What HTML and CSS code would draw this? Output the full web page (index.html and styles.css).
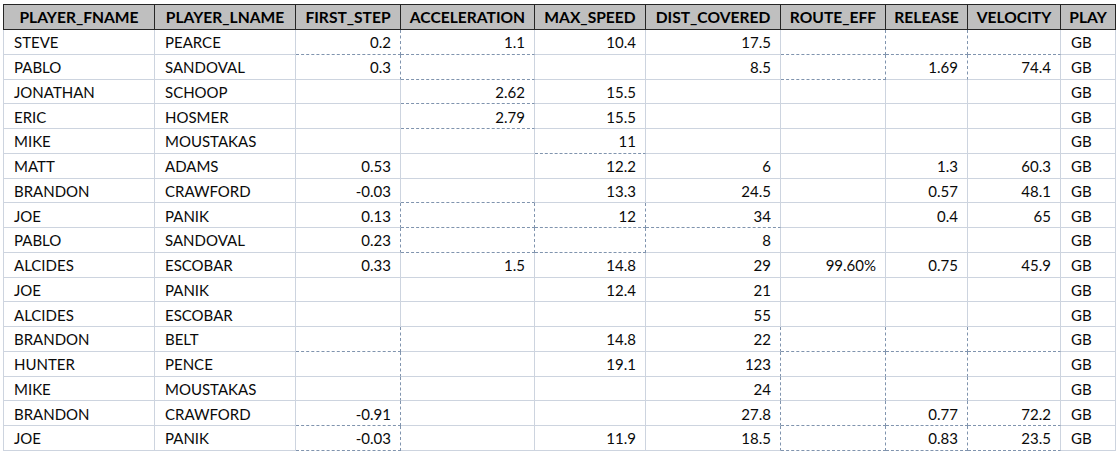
FILE: index.html
```html
<!DOCTYPE html>
<html>
<head>
<meta charset="utf-8">
<link rel="stylesheet" href="styles.css">
</head>
<body>
<table class="sheet">
<colgroup>
<col class="c1"><col class="c2"><col class="c3"><col class="c4"><col class="c5"><col class="c6"><col class="c7"><col class="c8"><col class="c9"><col class="c10">
</colgroup>
<thead>
<tr><th>PLAYER_FNAME</th><th>PLAYER_LNAME</th><th>FIRST_STEP</th><th>ACCELERATION</th><th>MAX_SPEED</th><th>DIST_COVERED</th><th>ROUTE_EFF</th><th>RELEASE</th><th>VELOCITY</th><th>PLAY</th></tr>
</thead>
<tbody>
<tr><td>STEVE</td><td>PEARCE</td><td class="n db dr">0.2</td><td class="n db">1.1</td><td class="n">10.4</td><td class="n">17.5</td><td class="n db dr"></td><td class="n db dr"></td><td class="n db"></td><td>GB</td></tr>
<tr><td>PABLO</td><td>SANDOVAL</td><td class="n dr">0.3</td><td class="n db"></td><td class="n"></td><td class="n">8.5</td><td class="n db dr"></td><td class="n dr">1.69</td><td class="n">74.4</td><td>GB</td></tr>
<tr><td>JONATHAN</td><td>SCHOOP</td><td class="n"></td><td class="n db">2.62</td><td class="n">15.5</td><td class="n"></td><td class="n"></td><td class="n"></td><td class="n"></td><td>GB</td></tr>
<tr><td>ERIC</td><td>HOSMER</td><td class="n"></td><td class="n db">2.79</td><td class="n">15.5</td><td class="n"></td><td class="n"></td><td class="n"></td><td class="n"></td><td>GB</td></tr>
<tr><td>MIKE</td><td>MOUSTAKAS</td><td class="n"></td><td class="n"></td><td class="n db">11</td><td class="n"></td><td class="n"></td><td class="n"></td><td class="n"></td><td>GB</td></tr>
<tr><td>MATT</td><td>ADAMS</td><td class="n">0.53</td><td class="n"></td><td class="n">12.2</td><td class="n">6</td><td class="n"></td><td class="n">1.3</td><td class="n">60.3</td><td>GB</td></tr>
<tr><td>BRANDON</td><td>CRAWFORD</td><td class="n">-0.03</td><td class="n db"></td><td class="n">13.3</td><td class="n">24.5</td><td class="n"></td><td class="n">0.57</td><td class="n">48.1</td><td>GB</td></tr>
<tr><td>JOE</td><td>PANIK</td><td class="n dr">0.13</td><td class="n db dr"></td><td class="n db dr">12</td><td class="n db">34</td><td class="n"></td><td class="n">0.4</td><td class="n">65</td><td>GB</td></tr>
<tr><td>PABLO</td><td>SANDOVAL</td><td class="n dr">0.23</td><td class="n db dr"></td><td class="n db dr"></td><td class="n">8</td><td class="n"></td><td class="n"></td><td class="n"></td><td>GB</td></tr>
<tr><td>ALCIDES</td><td>ESCOBAR</td><td class="n">0.33</td><td class="n">1.5</td><td class="n">14.8</td><td class="n">29</td><td class="n">99.60%</td><td class="n">0.75</td><td class="n">45.9</td><td>GB</td></tr>
<tr><td>JOE</td><td>PANIK</td><td class="n"></td><td class="n"></td><td class="n">12.4</td><td class="n">21</td><td class="n"></td><td class="n"></td><td class="n"></td><td>GB</td></tr>
<tr><td>ALCIDES</td><td>ESCOBAR</td><td class="n"></td><td class="n"></td><td class="n"></td><td class="n">55</td><td class="n"></td><td class="n"></td><td class="n"></td><td>GB</td></tr>
<tr><td>BRANDON</td><td>BELT</td><td class="n db dr"></td><td class="n"></td><td class="n">14.8</td><td class="n dr">22</td><td class="n db dr"></td><td class="n db dr"></td><td class="n db"></td><td>GB</td></tr>
<tr><td>HUNTER</td><td>PENCE</td><td class="n dr"></td><td class="n"></td><td class="n">19.1</td><td class="n dr">123</td><td class="n dr"></td><td class="n dr"></td><td class="n"></td><td>GB</td></tr>
<tr><td>MIKE</td><td>MOUSTAKAS</td><td class="n dr"></td><td class="n"></td><td class="n"></td><td class="n dr">24</td><td class="n dr"></td><td class="n dr"></td><td class="n"></td><td>GB</td></tr>
<tr><td>BRANDON</td><td>CRAWFORD</td><td class="n db dr">-0.91</td><td class="n"></td><td class="n"></td><td class="n dr">27.8</td><td class="n db dr"></td><td class="n db dr">0.77</td><td class="n db">72.2</td><td>GB</td></tr>
<tr><td>JOE</td><td>PANIK</td><td class="n db dr">-0.03</td><td class="n"></td><td class="n">11.9</td><td class="n dr">18.5</td><td class="n db dr"></td><td class="n db dr">0.83</td><td class="n db">23.5</td><td>GB</td></tr>
</tbody>
</table>
</body>
</html>
```
FILE: styles.css
```css
html, body {
  margin: 0;
  padding: 0;
  background: #ffffff;
}

body {
  padding: 4px 0 0 3px;
  font-family: Lato, "Noto Sans", sans-serif;
  font-size: 15px;
  color: #000000;
}

.sheet {
  border-collapse: separate;
  border-spacing: 0;
  table-layout: fixed;
  width: 1113px;
}

.c1 { width: 152px; }
.c2 { width: 141px; }
.c3 { width: 105px; }
.c4 { width: 134px; }
.c5 { width: 111px; }
.c6 { width: 135px; }
.c7 { width: 105px; }
.c8 { width: 82px; }
.c9 { width: 93px; }
.c10 { width: 55px; }

.sheet th {
  box-sizing: border-box;
  height: 26px;
  padding: 0 2px;
  background: #bfbfbf;
  font-size: 15.6px;
  font-weight: 700;
  text-align: center;
  border-top: 1px solid #262626;
  border-bottom: 1px solid #262626;
  border-right: 1px solid #262626;
  white-space: nowrap;
  overflow: hidden;
}

.sheet th:first-child {
  border-left: 1px solid #262626;
}

.sheet tbody tr {
  height: 24.76px;
}

.sheet td {
  box-sizing: border-box;
  padding: 1px 9px 0 10px;
  border-right: 1px solid #cdd4df;
  border-bottom: 1px solid #cdd4df;
  white-space: nowrap;
  overflow: hidden;
  text-align: left;
  color: #0a0a0a;
}

.sheet td:first-child {
  border-left: 1px solid #cdd4df;
}

.sheet td.n {
  text-align: right;
}

.sheet td.db {
  border-bottom: 1px dashed #8094ae;
}

.sheet td.dr {
  border-right: 1px dashed #8094ae;
}
```
